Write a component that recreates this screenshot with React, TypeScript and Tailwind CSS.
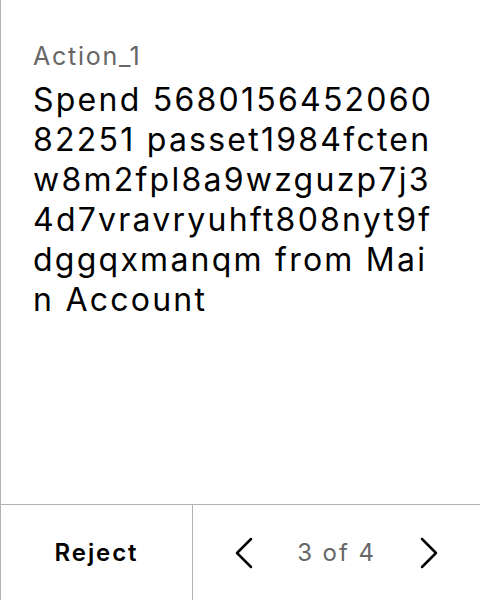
export default function App() {
  return (
    <div className="flex flex-col h-[600px] w-[480px] bg-white border-l border-[#b3b3b3] font-['Inter',sans-serif]">
      <div className="flex-1 px-8 pt-10">
        <div className="text-[25px] leading-[32px] tracking-[0.07em] text-[#666666]">Action_1</div>
        <div className="mt-2 text-[32px] leading-[40px] tracking-[0.07em] text-black break-all">
          Spend 568015645206082251 passet1984fctenw8m2fpl8a9wzguzp7j34d7vravryuhft808nyt9fdggqxmanqm from Main Account
        </div>
      </div>
      <div className="flex h-[96px] border-t border-[#b3b3b3]">
        <button className="w-[191px] flex items-center justify-center text-[24px] tracking-[0.08em] font-semibold text-black">
          Reject
        </button>
        <div className="flex-1 flex items-center justify-between border-l border-[#b3b3b3] px-[42px]">
          <svg width="18" height="32" viewBox="0 0 18 32" fill="none" stroke="black" strokeWidth="2.5" strokeLinecap="round" strokeLinejoin="round">
            <polyline points="16,2 2,16 16,30" />
          </svg>
          <span className="text-[24px] tracking-[0.08em] text-[#666666]">3 of 4</span>
          <svg width="18" height="32" viewBox="0 0 18 32" fill="none" stroke="black" strokeWidth="2.5" strokeLinecap="round" strokeLinejoin="round">
            <polyline points="2,2 16,16 2,30" />
          </svg>
        </div>
      </div>
    </div>
  );
}
